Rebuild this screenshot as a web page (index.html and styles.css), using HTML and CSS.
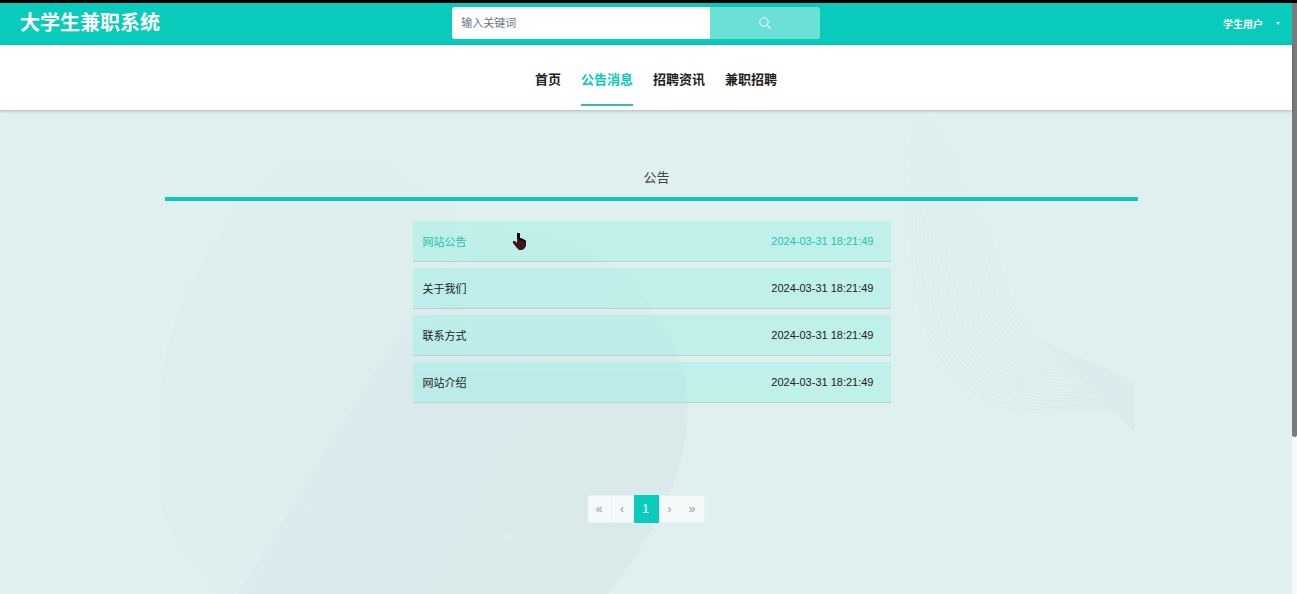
FILE: index.html
```html
<!DOCTYPE html>
<html lang="zh-CN">
<head>
<meta charset="utf-8">
<title>大学生兼职系统</title>
<link rel="stylesheet" href="styles.css">
</head>
<body>
<div class="page">
  <header class="topbar">
    <div class="brand">大学生兼职系统</div>
    <form class="search">
      <input class="search-input" type="text" placeholder="输入关键词" aria-label="输入关键词">
      <button class="search-button" type="button" aria-label="搜索">
        <svg width="12" height="12" viewBox="0 0 12 12" fill="none" stroke="#fff" stroke-linecap="round"><circle cx="5" cy="5" r="4.2" stroke-width=".9"/><path d="M8.1 8.1 11.3 11.3" stroke-width="1.1"/></svg>
      </button>
    </form>
    <button class="user" type="button">学生用户
      <svg width="4" height="3" viewBox="0 0 4 3"><path d="M0 0h4L2 3z" fill="#fff"/></svg>
    </button>
  </header>
  <nav class="nav">
    <a href="#">首页</a>
    <a href="#" class="active" aria-current="page">公告消息</a>
    <a href="#">招聘资讯</a>
    <a href="#">兼职招聘</a>
  </nav>
  <main class="main">
    <svg class="backdrop" viewBox="0 0 1291 484" preserveAspectRatio="xMidYMin slice" aria-hidden="true">
      <defs>
        <linearGradient id="outer" x1="0" y1="0" x2="0" y2="1">
          <stop offset="0" stop-color="#ddedeb" stop-opacity=".1"/>
          <stop offset=".5" stop-color="#ddedeb" stop-opacity=".7"/>
          <stop offset="1" stop-color="#dfeeee"/>
        </linearGradient>
        <linearGradient id="band" gradientUnits="userSpaceOnUse" x1="310" y1="350" x2="510" y2="450">
          <stop offset="0" stop-color="#dcebee"/>
          <stop offset=".25" stop-color="#dae9ed"/>
          <stop offset="1" stop-color="#dae9e9"/>
        </linearGradient>
        <linearGradient id="fade" x1="0" y1="0" x2="0" y2="1">
          <stop offset="0" stop-color="#fff" stop-opacity=".1"/>
          <stop offset=".6" stop-color="#fff"/>
        </linearGradient>
        <linearGradient id="band-fade" x1="0" y1="0" x2="0" y2="1">
          <stop offset=".23" stop-color="#fff" stop-opacity=".15"/>
          <stop offset=".55" stop-color="#fff"/>
        </linearGradient>
        <mask id="top-fade"><rect width="1291" height="484" fill="url(#fade)"/></mask>
        <mask id="blob-fade"><rect width="1291" height="484" fill="url(#band-fade)"/></mask>
      </defs>
      <path d="M340 0C260 50 160 180 160 290V395C170 430 198 455 218 484H500L450 90C420 80 370 40 355 0Z" fill="url(#outer)"/>
      <path d="M238 484 400 220C425 180 450 145 475 118C570 122 620 150 650 197C680 240 688 270 687 305C686 365 650 430 607 484Z" fill="url(#band)" mask="url(#blob-fade)"/>
      <circle cx="508" cy="427" r="4" fill="#dfeeed"/>
      <circle cx="307" cy="396" r="3" fill="#dfeeed"/>
      <g id="waves" mask="url(#top-fade)" fill="none" stroke="#d7e7e7" stroke-width=".7"></g>
      <path d="M1040 229 1060 240 1107 259 1133 275V322L1113 300Q1085 272 1065 257Z" fill="#dae9ed" opacity=".5"/>
    </svg>
    <section class="notices">
      <h1 class="title">公告</h1>
      <ul class="list">
        <li><a href="#" class="row hovered"><span>网站公告</span><time>2024-03-31 18:21:49</time></a></li>
        <li><a href="#" class="row"><span>关于我们</span><time>2024-03-31 18:21:49</time></a></li>
        <li><a href="#" class="row"><span>联系方式</span><time>2024-03-31 18:21:49</time></a></li>
        <li><a href="#" class="row"><span>网站介绍</span><time>2024-03-31 18:21:49</time></a></li>
      </ul>
    </section>
    <div class="pager">
      <button type="button" class="edge">«</button>
      <button type="button">‹</button>
      <button type="button" class="current" aria-current="page">1</button>
      <button type="button">›</button>
      <button type="button" class="edge">»</button>
    </div>
  </main>
</div>
<div class="scroll-track"><div class="scroll-thumb"></div></div>
<svg class="pointer" width="13" height="17" viewBox="0 0 13 17" aria-hidden="true"><path d="M4 0h2l1 1v4l3 1 3 2v5l-2 3-2 1H6l-3-3-3-4V8h2l2 2z" fill="#421317"/><path d="M4 0h2l1 1v4l3 1 3 2v2L9 7 6 8V5H4z" fill="#080507"/></svg>
<script src="script.js"></script>
</body>
</html>
```

FILE: styles.css
```css
* {
  box-sizing: border-box;
}

body {
  margin: 0;
  min-height: 100vh;
  display: flex;
  border-top: 3px solid #000;
  background: #e0f0ee;
  color: #222;
  font-family: "Liberation Sans", "Noto Sans CJK SC", sans-serif;
  font-size: 11px;
}

a {
  color: inherit;
  text-decoration: none;
}

button {
  border: 0;
  padding: 0;
  font-family: inherit;
  cursor: pointer;
}

.page {
  flex: 1;
  display: flex;
  flex-direction: column;
}

.topbar {
  display: grid;
  grid-template-columns: 35% 368px 1fr;
  align-items: center;
  height: 42px;
  padding-bottom: 2px;
  background: #08cbbb;
  color: #fff;
}

.brand {
  padding-left: 20px;
  font-size: 20px;
  line-height: 24px;
  font-weight: 700;
}

.search {
  display: flex;
  height: 32px;
  border-radius: 3px;
  overflow: hidden;
}

.search-input {
  flex: 1;
  min-width: 0;
  border: 0;
  padding: 0 9px;
  background: #fff;
  font-family: inherit;
  font-size: 11px;
}

.search-input::placeholder {
  color: #6c757d;
}

.search-button {
  width: 110px;
  display: flex;
  align-items: center;
  justify-content: center;
  background: #6be0d6;
}

.user {
  justify-self: end;
  display: flex;
  align-items: center;
  gap: 13px;
  padding: 0 12px;
  background: none;
  color: #fff;
  font-size: 10px;
  font-weight: 700;
}

.nav {
  position: relative;
  z-index: 1;
  display: flex;
  justify-content: center;
  gap: 20px;
  height: 65px;
  padding: 20px 0 4px 20px;
  background: #fff;
  box-shadow: 0 1px 3px rgba(0, 0, 0, .25);
  font-size: 13px;
  line-height: 30px;
  font-weight: 700;
}

.nav .active {
  border-bottom: 2px solid #32bdb1;
  color: #08cbbb;
}

.main {
  position: relative;
  flex: 1;
  padding-top: 56px;
}

.backdrop {
  position: absolute;
  inset: 0;
  width: 100%;
  height: 100%;
}

.notices {
  position: relative;
  padding-left: 11px;
}

.title {
  width: 76%;
  margin: 0 auto 20px;
  padding: 0 0 7px 10px;
  border-bottom: 4px solid #10c8ba;
  color: #444;
  font-size: 13px;
  line-height: 24px;
  font-weight: 400;
  text-align: center;
}

.list {
  display: grid;
  gap: 6px;
  width: 478px;
  max-width: 100%;
  margin: 0 auto;
  padding: 0;
  list-style: none;
}

.row {
  display: flex;
  align-items: center;
  justify-content: space-between;
  height: 41px;
  padding: 0 17px 0 10px;
  border-bottom: 1px solid #c1cfce;
  background: rgba(158, 240, 230, .5);
}

.row.hovered {
  color: #25c2b3;
}

.pager {
  position: relative;
  display: flex;
  justify-content: center;
  margin-top: 92px;
}

.pager button {
  width: 22px;
  height: 28px;
  border: 1px solid #e8f1f0;
  border-left-width: 0;
  background: #f4fafa;
  color: #929b9b;
  font-size: 12px;
}

.pager .edge {
  width: 24px;
}

.pager button:nth-child(4) {
  border-right-width: 0;
}

.pager .current {
  width: 25px;
  border-color: #08cbbb;
  background: #08cbbb;
  color: #fff;
}

.scroll-track {
  width: 5px;
  background: #f8f9f9;
}

.scroll-thumb {
  height: 73vh;
  border-radius: 0 0 3px 3px;
  background: #7b7b7b;
}

.pointer {
  position: absolute;
  left: 513px;
  top: 233px;
  pointer-events: none;
}
```

FILE: script.js
```javascript
// Fans thin lines between the outer and inner edges of the backdrop wave.
const outer = [[912, 0], [908, 80], [906, 120], [915, 177], [928, 265], [980, 303], [1047, 303], [1095, 303], [1110, 285], [1133, 322]];
const inner = [[925, 0], [945, 30], [975, 80], [1000, 157], [1015, 210], [1030, 232], [1060, 242], [1085, 250], [1110, 260], [1133, 273]];
const waves = document.getElementById("waves");
for (let i = 0; i <= 20; i++) {
  const t = i / 20;
  const p = outer.map(([x, y], k) => [
    Math.round(x + (inner[k][0] - x) * t),
    Math.round(y + (inner[k][1] - y) * t)
  ].join(" "));
  const line = document.createElementNS("http://www.w3.org/2000/svg", "path");
  line.setAttribute("d", `M${p[0]}C${p.slice(1).join(" ")}`);
  waves.append(line);
}
```
